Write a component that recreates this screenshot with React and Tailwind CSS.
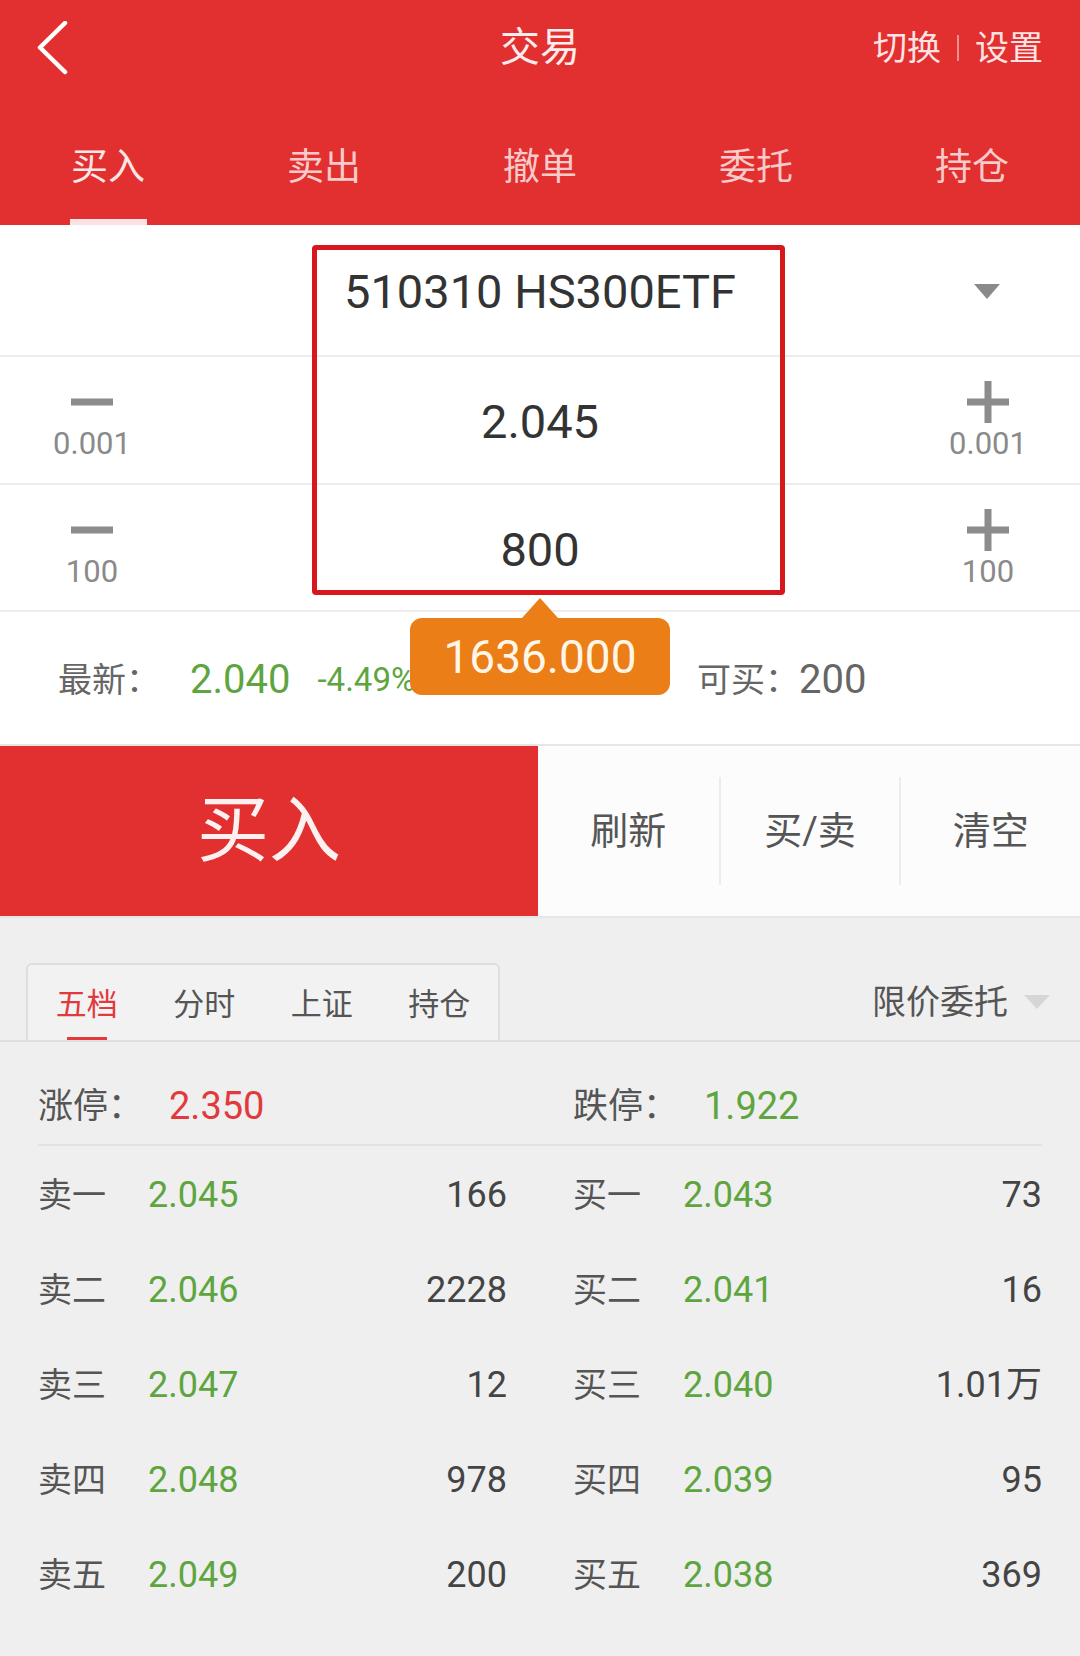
import React from 'react';

const navTabs = ['买入', '卖出', '撤单', '委托', '持仓'];
const quoteTabs = ['五档', '分时', '上证', '持仓'];

const sells = [
  ['卖一', '2.045', '166'],
  ['卖二', '2.046', '2228'],
  ['卖三', '2.047', '12'],
  ['卖四', '2.048', '978'],
  ['卖五', '2.049', '200'],
];
const buys = [
  ['买一', '2.043', '73'],
  ['买二', '2.041', '16'],
  ['买三', '2.040', '1.01万'],
  ['买四', '2.039', '95'],
  ['买五', '2.038', '369'],
];

function StepIcon({ plus }) {
  return (
    <svg width="42" height="42" viewBox="0 0 42 42">
      <rect x="0" y="17.5" width="42" height="7" fill="#8c8c8c" />
      {plus && <rect x="17.5" y="0" width="7" height="42" fill="#8c8c8c" />}
    </svg>
  );
}

function Stepper({ plus, label }) {
  return (
    <div className="flex w-[184px] flex-col items-center justify-center">
      <StepIcon plus={plus} />
      <span className="mt-[6px] text-[31px] leading-[30px] text-[#8a8a8a]">{label}</span>
    </div>
  );
}

function QuoteCell({ label, price, vol }) {
  return (
    <div className="flex items-center">
      <span className="w-[110px] text-[34px] leading-none text-[#555]">{label}</span>
      <span className="text-[36px] leading-none text-[#5ea53f]">{price}</span>
      <span className="ml-auto text-[36px] leading-none text-[#444]">{vol}</span>
    </div>
  );
}

export default function App() {
  return (
    <div className="relative h-[1656px] w-[1080px] overflow-hidden bg-[#efefef] font-['Roboto','Noto_Sans_CJK_SC',sans-serif]">
      {/* header */}
      <div className="bg-[#e1302f]">
        <div className="flex h-[96px] items-center">
          <div className="flex w-[260px] pl-[37px]">
            <svg width="32" height="54" viewBox="0 0 32 54">
              <path d="M28 2 L3 26.5 L28 51" fill="none" stroke="#fff" strokeWidth="4.5" strokeLinecap="round" strokeLinejoin="round" />
            </svg>
          </div>
          <div className="flex-1 text-center text-[40px] leading-none text-[#fdecec]">交易</div>
          <div className="flex w-[260px] items-center justify-end whitespace-nowrap pr-[37px] text-[34px] leading-none text-[#fde3e3]">
            <span>切换</span>
            <span className="mx-[16px] h-[26px] w-[2px] bg-[#f08e8e]" />
            <span>设置</span>
          </div>
        </div>
        <div className="grid h-[129px] grid-cols-5">
          {navTabs.map((t, i) => (
            <div key={t} className="flex flex-col items-center justify-end">
              <span className={`text-[37px] leading-none ${i === 0 ? 'text-[#fde6e6]' : 'text-[#f8caca]'}`}>{t}</span>
              <span className={`mt-[33px] h-[6px] w-[77px] ${i === 0 ? 'bg-[#fbe3e3]' : 'bg-transparent'}`} />
            </div>
          ))}
        </div>
      </div>

      {/* order form */}
      <div className="relative bg-white">
        <div className="flex h-[132px] items-center border-b-2 border-[#ededed] pt-[2px]">
          <div className="w-[184px]" />
          <div className="flex-1 text-center text-[47px] leading-none text-[#333]">510310 HS300ETF</div>
          <div className="flex w-[184px] justify-center pr-[2px]">
            <svg width="26" height="15" viewBox="0 0 26 15">
              <path d="M0 0 H26 L13 15 Z" fill="#8a8a8a" />
            </svg>
          </div>
        </div>
        <div className="flex h-[128px] border-b-2 border-[#ededed]">
          <Stepper label="0.001" />
          <div className="flex flex-1 items-center justify-center pt-[3px] text-[47px] leading-none text-[#333]">2.045</div>
          <Stepper plus label="0.001" />
        </div>
        <div className="flex h-[127px] border-b-2 border-[#ededed]">
          <Stepper label="100" />
          <div className="flex flex-1 items-center justify-center pt-[3px] text-[47px] leading-none text-[#333]">800</div>
          <Stepper plus label="100" />
        </div>
        <div className="flex h-[132px] items-center pt-[3px]">
          <div className="flex w-[697px] items-center pl-[58px]">
            <span className="w-[132px] text-[34px] leading-none text-[#666]">最新：</span>
            <span className="text-[40px] leading-none text-[#5ea53f]">2.040</span>
            <span className="ml-[27px] text-[33px] leading-none text-[#5ea53f]">-4.49%</span>
          </div>
          <div className="flex items-center text-[#666]">
            <span className="text-[34px] leading-none">可买：</span>
            <span className="text-[40px] leading-none">200</span>
          </div>
        </div>

        {/* highlight box */}
        <div className="absolute left-[312px] top-[20px] h-[350px] w-[473px] rounded-[4px] border-[5px] border-[#d8171d]" />

        {/* amount bubble */}
        <div className="absolute left-[410px] top-[373px] flex h-[97px] w-[260px] flex-col items-center">
          <div className="h-0 w-0 border-x-[18px] border-b-[20px] border-x-transparent border-b-[#eb7e16]" />
          <div className="flex h-[77px] w-[260px] items-center justify-center rounded-[12px] bg-[#eb7e16] text-[46px] leading-none text-[#fff6e8]">
            1636.000
          </div>
        </div>
      </div>

      {/* action bar */}
      <div className="flex h-[174px] border-y-2 border-[#e6e6e6] bg-[#fcfcfc]">
        <div className="flex w-[538px] items-center justify-center bg-[#e1302f] text-[72px] leading-none text-[#fdf0f0]">买入</div>
        <div className="grid flex-1 grid-cols-3 items-center">
          {['刷新', '买/卖', '清空'].map((t, i) => (
            <div
              key={t}
              className={`flex h-[108px] items-center justify-center text-[38px] leading-none text-[#555] ${i > 0 ? 'border-l-2 border-[#ececec]' : ''}`}
            >
              {t}
            </div>
          ))}
        </div>
      </div>

      {/* quote tabs */}
      <div className="mt-[45px] flex items-end justify-between border-b-2 border-[#dedede] pl-[26px] pr-[30px]">
        <div className="flex h-[77px] w-[474px] rounded-t-[6px] border-2 border-b-0 border-[#dedede] bg-[#f2f2f2]">
          {quoteTabs.map((t, i) => (
            <div key={t} className="flex flex-1 flex-col items-center justify-end">
              <span className={`text-[31px] leading-[31px] ${i === 0 ? 'text-[#e23a3c]' : 'text-[#555]'}`}>{t}</span>
              <span className={`mt-[17px] h-[3px] w-[40px] ${i === 0 ? 'bg-[#e23a3c]' : 'bg-transparent'}`} />
            </div>
          ))}
        </div>
        <div className="flex items-center self-center">
          <span className="text-[34px] leading-none text-[#555]">限价委托</span>
          <svg className="ml-[16px]" width="26" height="14" viewBox="0 0 26 14">
            <path d="M0 0 H26 L13 14 Z" fill="#d6d6d6" />
          </svg>
        </div>
      </div>

      {/* order book */}
      <div className="px-[38px]">
        <div className="grid h-[104px] grid-cols-2 items-center gap-x-[66px] border-b-2 border-[#e2e2e2] pt-[26px]">
          <div className="flex items-center">
            <span className="w-[131px] text-[35px] leading-none text-[#555]">涨停：</span>
            <span className="text-[38px] leading-none text-[#e23a3c]">2.350</span>
          </div>
          <div className="flex items-center">
            <span className="w-[131px] text-[35px] leading-none text-[#555]">跌停：</span>
            <span className="text-[38px] leading-none text-[#5ea53f]">1.922</span>
          </div>
        </div>
        {sells.map((s, i) => (
          <div key={s[0]} className="grid h-[95px] grid-cols-2 items-center gap-x-[66px] pt-[3px]">
            <QuoteCell label={s[0]} price={s[1]} vol={s[2]} />
            <QuoteCell label={buys[i][0]} price={buys[i][1]} vol={buys[i][2]} />
          </div>
        ))}
      </div>
    </div>
  );
}
